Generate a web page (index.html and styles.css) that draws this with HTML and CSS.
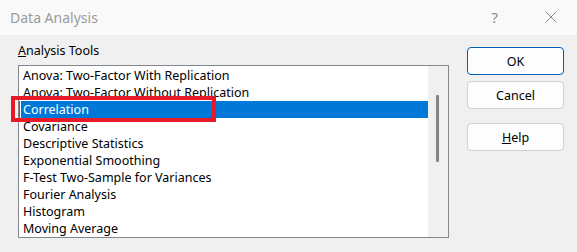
FILE: index.html
```html
<!DOCTYPE html>
<html>
<head>
<meta charset="utf-8">
<link rel="stylesheet" href="styles.css">
</head>
<body>
<div class="dialog">
  <div class="titlebar">
    <span class="title">Data Analysis</span>
    <span class="help-q">?</span>
    <svg class="close" width="12" height="12" viewBox="0 0 12 12"><path d="M0.5 0.5 L11.5 11.5 M11.5 0.5 L0.5 11.5" stroke="#8a8a8a" stroke-width="1" fill="none"/></svg>
  </div>
  <div class="content">
    <div class="left">
      <div class="label"><u>A</u>nalysis Tools</div>
      <div class="listbox">
        <ul class="items">
          <li>Anova: Two-Factor With Replication</li>
          <li>Anova: Two-Factor Without Replication</li>
          <li class="selected">Correlation</li>
          <li>Covariance</li>
          <li>Descriptive Statistics</li>
          <li>Exponential Smoothing</li>
          <li>F-Test Two-Sample for Variances</li>
          <li>Fourier Analysis</li>
          <li>Histogram</li>
          <li>Moving Average</li>
        </ul>
        <div class="scrollbar"><div class="thumb"></div></div>
      </div>
    </div>
    <div class="buttons">
      <button class="btn default">OK</button>
      <button class="btn">Cancel</button>
      <button class="btn gap"><u>H</u>elp</button>
    </div>
  </div>
  <div class="highlight"></div>
</div>
</body>
</html>
```
FILE: styles.css
```css
* { box-sizing: border-box; }
html, body { margin: 0; padding: 0; }
body {
  width: 577px;
  height: 252px;
  background: #f0f0f0;
  font-family: "Noto Sans", "Segoe UI", sans-serif;
  font-size: 12.5px;
  color: #000;
  overflow: hidden;
}
.dialog { position: relative; width: 577px; height: 252px; }
.titlebar {
  height: 35px;
  background: #f9f9f9;
  display: flex;
  align-items: center;
  padding-left: 10px;
}
.title {
  font-size: 14px;
  color: #9b9b9b;
  flex: 1;
  margin-top: 0;
}
.help-q {
  font-size: 15px;
  color: #8a8a8a;
  margin-right: 47px;
  margin-top: -1px;
}
.close { margin-right: 20px; margin-top: -1px; }
.content {
  display: flex;
  padding-left: 18px;
}
.left { display: flex; flex-direction: column; }
.label {
  height: 16px;
  line-height: 16px;
  margin-top: 8px;
  margin-bottom: 6px;
}
.listbox {
  width: 431px;
  height: 173px;
  border: 1px solid #82878f;
  background: #fff;
  display: flex;
}
.items {
  list-style: none;
  margin: 0;
  padding: 1px 0 0 0;
  width: 409px;
}
.items li {
  height: 17px;
  line-height: 18px;
  padding-left: 4px;
  white-space: nowrap;
  overflow: hidden;
}
.items li.selected {
  background: #0078d7;
  color: #fff;
  box-shadow: inset 1px 0 0 #0078d7, inset 2px 0 0 #fff;
}
.scrollbar {
  width: 20px;
  background: #f0f0f0;
  padding-top: 29px;
  padding-left: 8px;
}
.thumb {
  width: 3px;
  height: 67px;
  background: #858585;
  border-radius: 1px;
}
.buttons {
  display: flex;
  flex-direction: column;
  margin-left: 18px;
  margin-top: 12px;
  gap: 6px;
}
.btn {
  width: 97px;
  height: 28px;
  background: #fdfdfd;
  border: 1px solid #d0d0d0;
  border-radius: 4px;
  font-family: "Noto Sans", "Segoe UI", sans-serif;
  font-size: 12.5px;
  color: #000;
  padding: 0;
}
.btn.default { border-color: #005fb8; }
.btn.gap { margin-top: 8px; }
.highlight {
  position: absolute;
  left: 11px;
  top: 96px;
  width: 205px;
  height: 26px;
  border: 4px solid #e81a27;
}
```
